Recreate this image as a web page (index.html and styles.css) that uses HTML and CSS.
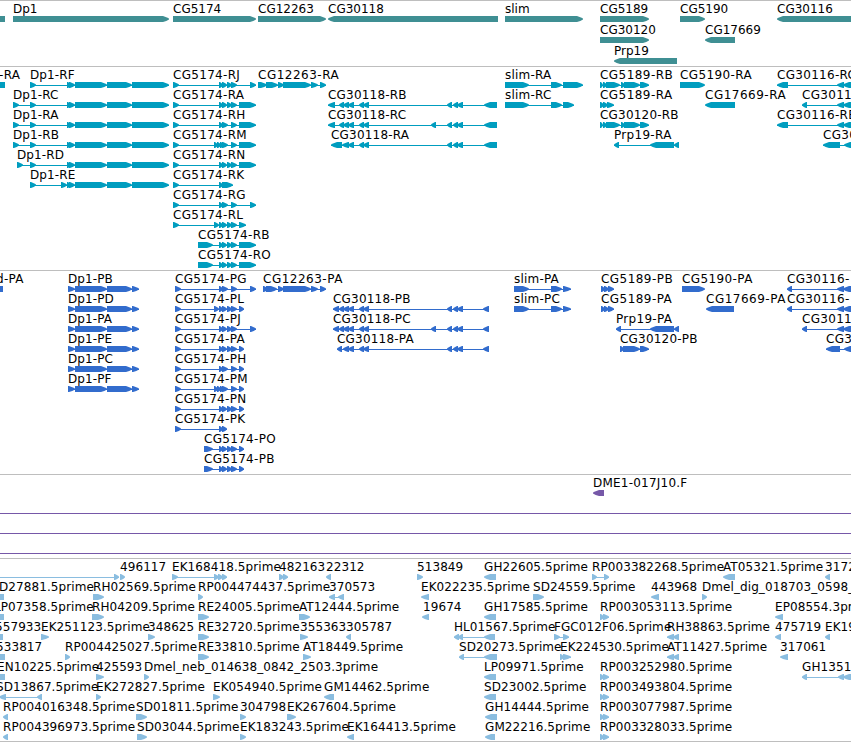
FILE: index.html
```
<!DOCTYPE html>
<html lang="en">
<head>
<meta charset="utf-8">
<title>Genome browser</title>
<link rel="stylesheet" href="styles.css">
</head>
<body>
<main class="browser">
  <section class="track"><svg class="map genes" id="genes" width="851" height="65"></svg></section>
  <section class="track"><svg class="map transcripts" id="transcripts" width="851" height="203"></svg></section>
  <section class="track"><svg class="map proteins" id="proteins" width="851" height="203"></svg></section>
  <section class="track"><svg class="map clones" id="clones" width="851" height="38"></svg></section>
  <section class="track spanning"></section>
  <section class="track spanning"></section>
  <section class="track spanning last"></section>
  <section class="track"><svg class="map ests" id="ests" width="851" height="182"></svg></section>
  <div class="end"></div>
</main>
<script src="tracks.js"></script>
</body>
</html>
```
FILE: styles.css
```
body {
  margin: 0;
  background: #fff;
  overflow: hidden;
}
.browser {
  display: flex;
  flex-direction: column;
  width: 851px;
}
.track {
  border-top: 1px solid #bebebe;
}
.map {
  display: block;
  overflow: hidden;
}
.map text {
  font: 12px "DejaVu Sans", sans-serif;
  fill: #000;
}
.genes { color: #3f8f93; }
.transcripts { color: #009dbf; }
.proteins { color: #326ccd; }
.clones { color: #7658a8; }
.ests { color: #8abde0; }
.glyph { fill: currentColor; }
.spanning {
  height: 19px;
  border-top-color: #7658a8;
}
.spanning.last { height: 4px; }
.end { height: 1px; background: #bebebe; }
```
FILE: tracks.js
```
// Each row is a list of features: "label x | label | strand | start-end,start-end,..."
// An empty label draws only the glyph; strand "=" draws plain blocks.
const dp = "67-71,69-75,75-107,107-132,132-169";
const four = "219-223,222-227,227-232,231-237";
const mset = "214-218,217-221,220-224,222-228,231-237";
const far = "359-364,363-369,447-452,453-458,457-463";
const farC = "359-364,363-369,431-436,447-452,453-458,457-463";
const cluster = "600-603,603-607,606-620,621-625,624-640,640-649";

const tracks = {
  genes: { spacing: 0, baseline: 12, top: 15, pitch: 21, rows: [
    ["0||=|-5-5", "13|Dp1|+|13-169", "173|CG5174|+|173-256", "258|CG12263|+|258-326", "328|CG30118|-|328-498",
     "505|slim|+|505-583", "600|CG5189|+|600-649", "680|CG5190|+|680-705", "777|CG30116|-|777-870"],
    ["600|CG30120|+|600-649", "705|CG17669|-|705-735"],
    ["614|Prp19|-|614-677"]
  ]},
  transcripts: { spacing: 0.3, baseline: 12, top: 15, pitch: 20, rows: [
    ["-1|-RA|=|-5-5", "30|Dp1-RF|+|30-36," + dp, "173|CG5174-RJ|+|173-179," + four + ",250-256",
     "258|CG12263-RA|+|258-267,266-278,278-284,283-311,311-318,320-326", "505|slim-RA|+|505-529,551-562,563-583",
     "600|CG5189-RB|+|" + cluster, "680|CG5190-RA|+|680-705", "777|CG30116-RC|-|777-788,837-844,843-870"],
    ["13|Dp1-RC|+|13-19,30-36," + dp, "173|CG5174-RA|+|173-179," + four + ",239-256",
     "328|CG30118-RB|-|328-335,339-344,343-349,348-354," + far + ",484-497", "505|slim-RC|+|505-529,551-562,563-574",
     "600|CG5189-RA|+|600-604,603-608,607-614", "705|CG17669-RA|-|705-735", "802|CG3011|-|802-807,837-844,843-870"],
    ["13|Dp1-RA|+|13-19,30-36," + dp, "173|CG5174-RH|+|173-179,219-223,222-228,231-237,239-256",
     "328|CG30118-RC|-|328-335,339-344,343-349,348-354," + farC + ",484-497", "600|CG30120-RB|+|" + cluster,
     "777|CG30116-RE|-|777-788,837-844,843-870"],
    ["13|Dp1-RB|+|13-19,30-36," + dp, "173|CG5174-RM|+|173-179," + mset + ",239-256",
     "331|CG30118-RA|-|331-342,342-349,348-354," + far + ",484-497", "614|Prp19-RA|-|614-619,650-674,674-679",
     "823|CG30|-|823-840,844-870"],
    ["17|Dp1-RD|+|17-23,30-36," + dp, "173|CG5174-RN|+|173-179," + four + ",239-256"],
    ["30|Dp1-RE|+|30-36,61-67," + dp, "173|CG5174-RK|+|173-179,219-223,222-233"],
    ["173|CG5174-RG|+|173-179,219-223,222-228,231-237,250-256"],
    ["173|CG5174-RL|+|173-179,214-219," + four + ",239-246"],
    ["198|CG5174-RB|+|198-213," + four + ",239-256"],
    ["198|CG5174-RO|+|198-213," + four + ",239-256"]
  ]},
  proteins: { spacing: 0.3, baseline: 12, top: 15, pitch: 20, rows: [
    ["-4|d-PA|=|-5-3", "68|Dp1-PB|+|68-75,75-107,107-132,132-139", "175|CG5174-PG|+|175-181,219-223,222-228,231-237,250-256",
     "263|CG12263-PA|+|263-268,266-277,278-284,283-311,311-318,320-326", "514|slim-PA|+|514-529,551-562,563-571",
     "601|CG5189-PB|+|601-605,604-609,608-614", "682|CG5190-PA|+|682-705", "787|CG30116-|-|787-792,837-844,843-870"],
    ["68|Dp1-PD|+|68-75,75-107,107-132,132-139", "175|CG5174-PL|+|175-181,214-219," + four + ",239-244",
     "333|CG30118-PB|-|333-339,339-344,343-349,348-354," + far + ",483-489", "514|slim-PC|+|514-529,551-562,563-571",
     "601|CG5189-PA|+|601-605,604-609,608-614", "706|CG17669-PA|-|706-734", "787|CG30116-|-|787-792,837-844,843-870"],
    ["68|Dp1-PA|+|68-75,75-107,107-132,132-139", "175|CG5174-PJ|+|175-181," + four + ",250-256",
     "333|CG30118-PC|-|333-339,339-344,343-349,348-354," + farC + ",483-489", "616|Prp19-PA|-|616-621,650-674,674-679",
     "802|CG3011|-|802-807,837-844,843-870"],
    ["68|Dp1-PE|+|68-75,75-107,107-132,132-139", "175|CG5174-PA|+|175-181," + four + ",239-244",
     "337|CG30118-PA|-|337-342,343-349,348-354," + far + ",483-489", "620|CG30120-PB|+|620-624,623-640,640-649",
     "826|CG3|-|826-840,844-870"],
    ["68|Dp1-PC|+|68-75,75-107,107-132,132-139", "175|CG5174-PH|+|175-181,219-223,222-228,231-237,239-244"],
    ["68|Dp1-PF|+|68-75,75-107,107-132,132-139", "175|CG5174-PM|+|175-181," + mset + ",239-244"],
    ["175|CG5174-PN|+|175-181," + four + ",239-244"],
    ["175|CG5174-PK|+|175-181,219-223,222-227"],
    ["204|CG5174-PO|+|204-213," + four + ",239-244"],
    ["204|CG5174-PB|+|204-213," + four + ",239-244"]
  ]},
  clones: { spacing: 0.22, baseline: 12, top: 15, pitch: 20, rows: [["593|DME1-017J10.F|-|593-604"]] },
  ests: { spacing: 0.08, baseline: 12, top: 15, pitch: 20, rows: [
    ["0||+|-20--10,114-119", "120|496117|+|120-125", "172|EK168418.5prime|+|172-178,214-219,218-223,222-227",
     "279|482163|+|279-284,283-288", "326|22312|-|326-331", "417|513849|+|417-423", "484|GH22605.5prime|-|484-496",
     "592|RP003382268.5prime|+|592-597,604-609", "723|AT05321.5prime|-|723-735", "825|3172|-|825-830"],
    ["-1|D27881.5prime|=|-5-4", "93|RH02569.5prime|+|93-104", "198|RP004474437.5prime|+|198-203", "329|370573|-|329-335,338-344",
     "421|EK022235.5prime|-|421-429", "533|SD24559.5prime|+|533-544", "651|443968|-|651-659", "702|Dmel_dig_018703_0598_|+|702-707"],
    ["-6|LP07358.5prime|=|-5-4", "92|RH04209.5prime|+|92-104", "198|RE24005.5prime|+|198-209", "299|AT12444.5prime|+|299-310",
     "423|19674|-|422-429", "484|GH17585.5prime|-|484-496", "600|RP003053113.5prime|+|600-604,603-609", "775|EP08554.3prime|-|775-783"],
    ["-5|557933|=|-5-3", "41|EK251123.5prime|+|41-49", "148|348625|+|148-155", "198|RE32720.5prime|+|198-209",
     "300|355363|+|300-308", "346|305787|-|346-351", "454|HL01567.5prime|-|454-459,458-463,484-495",
     "554|FGC012F06.5prime|+|554-560,563-569", "667|RH38863.5prime|-|667-674,673-679", "775|475719|-|775-781", "825|EK19|-|825-830"],
    ["-4|533817|=|-5-5", "65|RP004425027.5prime|+|65-70", "198|RE33810.5prime|+|198-209", "303|AT18449.5prime|+|303-311",
     "459|SD20273.5prime|-|459-464,484-497", "560|EK224530.5prime|+|560-564,563-571", "667|AT11427.5prime|-|667-674,673-679",
     "780|317061|-|780-788"],
    ["-3|EN10225.5prime|=|-5-5", "96|425593|+|96-104", "144|Dmel_neb_014638_0842_2503.3prime|+|144-149",
     "484|LP09971.5prime|-|484-496", "600|RP003252980.5prime|+|600-604,603-609", "802|GH1351|-|802-807,838-844,843-870"],
    ["-4|SD13867.5prime|-|-1-6,37-42", "96|EK272827.5prime|+|96-101", "213|EK054940.5prime|+|213-220",
     "324|GM14462.5prime|-|324-334", "484|SD23002.5prime|-|484-496", "600|RP003493804.5prime|+|600-604,603-609"],
    ["3|RP004016348.5prime|-|3-8", "136|SD01811.5prime|+|136-147", "240|304798|+|240-246", "287|EK267604.5prime|+|287-296",
     "485|GH14444.5prime|-|485-497", "600|RP003077987.5prime|+|600-604,603-609"],
    ["3|RP004396973.5prime|-|3-8", "137|SD03044.5prime|+|137-147", "240|EK183243.5prime|+|240-246",
     "347|EK164413.5prime|-|347-354", "485|GM22216.5prime|-|485-495", "600|RP003328033.5prime|+|600-604,603-609"]
  ]}
};

// Letter spacing of isoform labels, by gene, where it differs from the track's.
const geneSpacing = { "Dp1": 0.1, "CG12263": 0.5, "CG17669": 0.5, "CG5189": 0.45, "CG5190": 0.4, "CG30118": 0.2, "CG30120": 0.2, "slim": 0.2 };

const NS = "http://www.w3.org/2000/svg";

function add(svg, name, attrs, text) {
  const el = document.createElementNS(NS, name);
  for (const key in attrs) el.setAttribute(key, attrs[key]);
  if (text) el.textContent = text;
  svg.appendChild(el);
}

// One block, 6px high, with a slightly rounded taper towards the strand's end.
function block(a, b, y, strand) {
  if (strand === "=") return `M${a} ${y}H${b}V${y + 6}H${a}Z`;
  const back = strand === "-";
  const w = b - a;
  const tip = w > 8 ? 6 : w - 1;
  const end = back ? a : b, start = back ? b : a, dir = back ? 1 : -1;
  const shoulder = end + dir * tip, mid = end + dir * tip * 0.45;
  return `M${start} ${y}H${shoulder}L${mid} ${y + 1.2}L${end} ${y + 2.6}V${y + 3.6}L${mid} ${y + 4.9}L${shoulder} ${y + 6}H${start}Z`;
}

for (const id in tracks) {
  const svg = document.getElementById(id);
  const { spacing, baseline, top, pitch, rows } = tracks[id];
  rows.forEach((row, i) => {
    for (const feature of row) {
      const [x, label, strand, spans] = feature.split("|");
      const y = top + i * pitch;
      const parts = spans.split(",").map(s => s.match(/^(-?\d+)-(-?\d+)$/).slice(1).map(Number));
      const first = parts[0][0], last = parts[parts.length - 1][1];
      if (parts.length > 1) {
        add(svg, "rect", { class: "glyph", x: first, y: y + 3, width: last - first, height: 1 });
      }
      for (const [a, b] of parts) {
        add(svg, "path", { class: "glyph", d: block(a, b, y, strand) });
      }
      if (label) {
        const own = label.includes("-") ? geneSpacing[label.split("-")[0]] : undefined;
        add(svg, "text", { x, y: baseline + i * pitch, "letter-spacing": own ?? spacing }, label);
      }
    }
  });
}
```
